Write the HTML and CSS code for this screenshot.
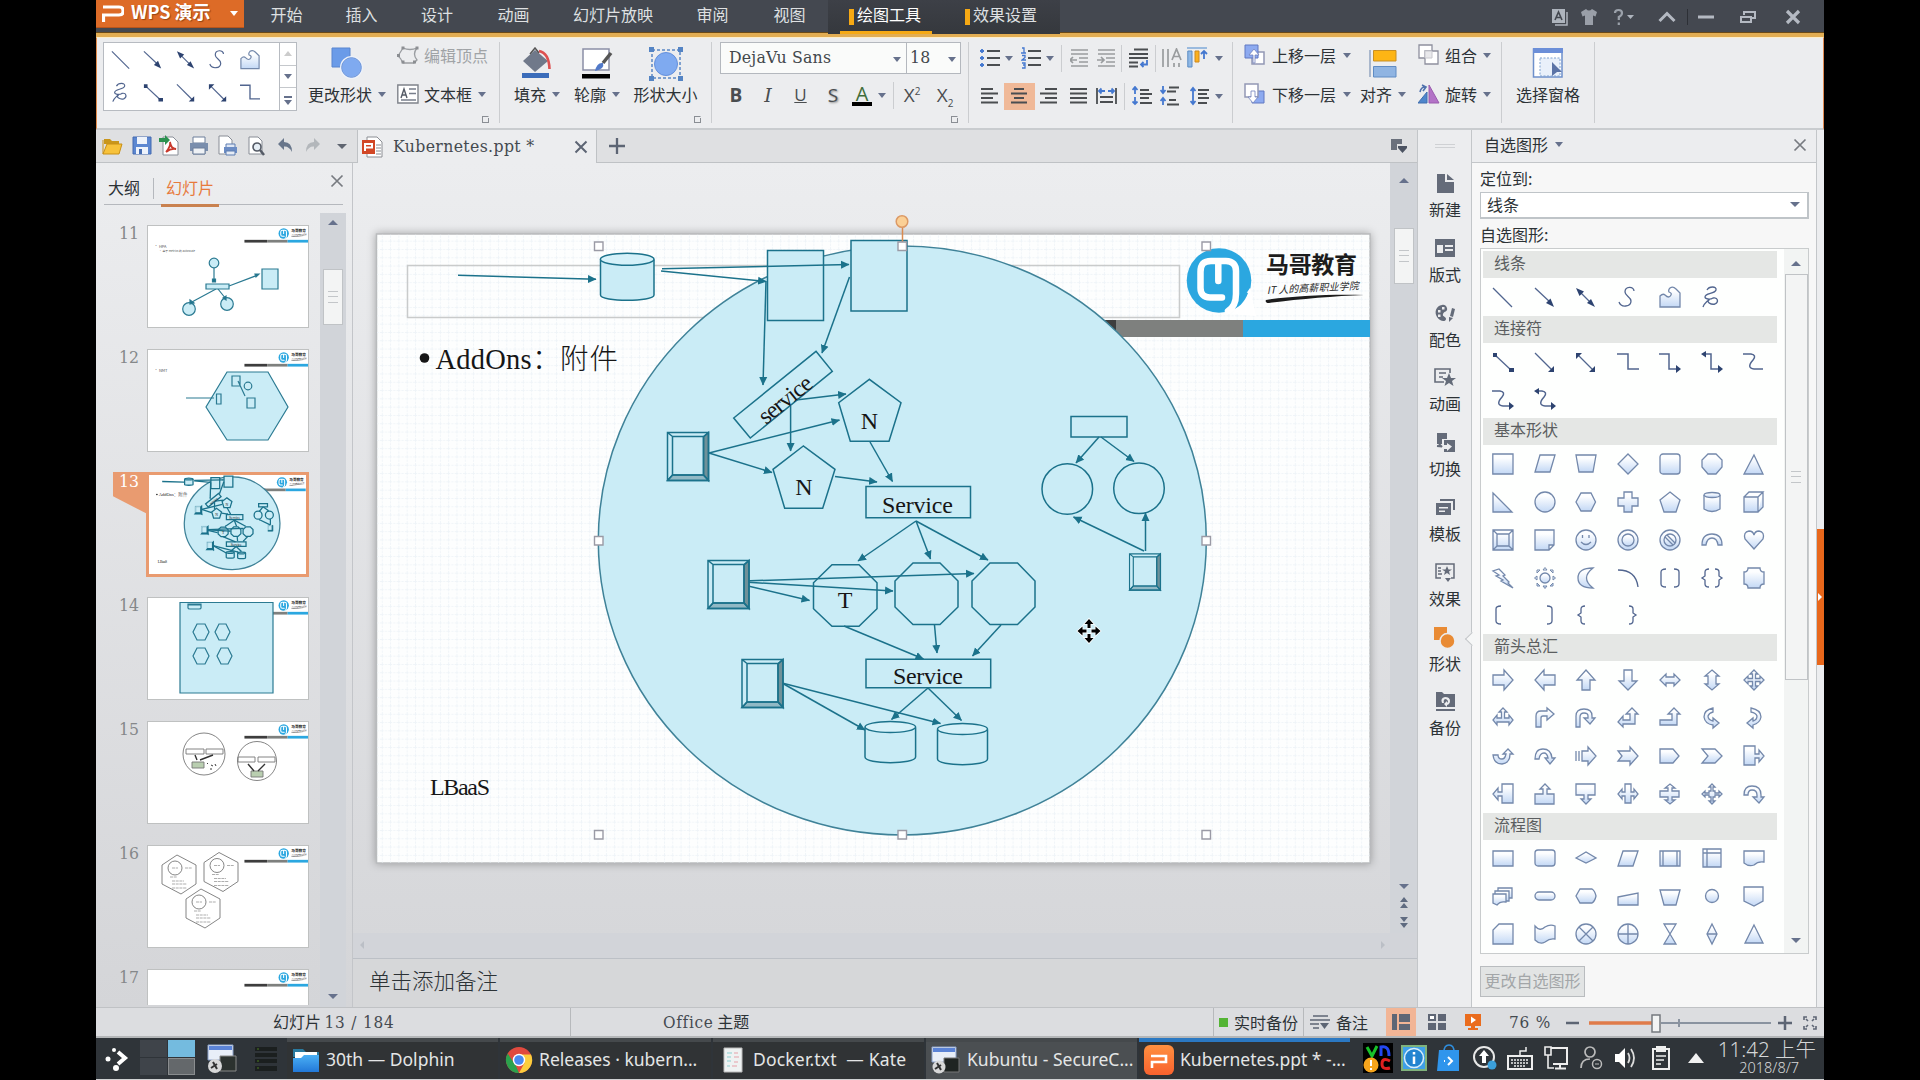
FILE: index.html
```html
<!DOCTYPE html>
<html lang="zh-CN">
<head>
<meta charset="utf-8">
<title>WPS 演示 - Kubernetes.ppt</title>
<link rel="stylesheet" href="styles.css">
</head>
<body>
<svg class="defs" width="0" height="0">
  <defs>
    <linearGradient id="sg" x1="0" y1="0" x2="0" y2="1"><stop offset=".2" stop-color="#fdfeff"/><stop offset="1" stop-color="#c3d8f5"/></linearGradient>
    <linearGradient id="bluefold" x1="0" y1="0" x2="0" y2="1"><stop offset="0" stop-color="#4bb0f5"/><stop offset="1" stop-color="#2278d8"/></linearGradient>
    <linearGradient id="wpsg" x1="0" y1="0" x2="0" y2="1"><stop offset="0" stop-color="#ff9040"/><stop offset="1" stop-color="#f8622e"/></linearGradient>
    <pattern id="dots" width="8.3" height="8.3" patternUnits="userSpaceOnUse"><path d="M0 .5H8.3M.5 0V8.3" stroke="#eff4f8" stroke-width="1" stroke-dasharray="2 1.2"/></pattern>
    <marker id="ah" markerUnits="userSpaceOnUse" markerWidth="9" markerHeight="9" refX="8" refY="4.5" orient="auto"><path d="M0 .5L8.5 4.5L0 8.5z" fill="#1b728b"/></marker>
    <symbol id="l-line" viewBox="0 0 22 22"><path class="ln" d="M1 2L20 21"/></symbol>
    <symbol id="l-arrow" viewBox="0 0 22 22"><path class="ln" d="M1 2L17 17"/><path class="hd" d="M20 21l-8-4 4.500-4.500z"/></symbol>
    <symbol id="l-double" viewBox="0 0 22 22"><path class="ln" d="M4 5L17 18"/><path class="hd" d="M20 21l-8-4 4-4zM1 2l8 3.500-4.500 4.500z"/></symbol>
    <symbol id="l-curve" viewBox="0 0 22 22"><path class="ln" d="M17 5C17 0 8 0 8 6C8 10 14 11 14 15C14 21 4 22 2 16"/></symbol>
    <symbol id="l-free" viewBox="0 0 22 22"><path class="sh" d="M1 21V10Q4 7 6 9Q10 13 12 9Q13 7 10 6Q9 4 11 2Q14 0 17 3L21 7V21z"/></symbol>
    <symbol id="l-scrib" viewBox="0 0 22 22"><path class="ln" d="M6 4C8 0 16 0 15 4C14 8 4 7 4 11C4 13 9 14 12 12C17 11 18 16 14 18C10 19 5 16 8 14C10 12 3 17 2 21"/></symbol>
    <symbol id="c-sq" viewBox="0 0 22 22"><path class="ln" d="M3 4L19 19"/><path class="hd" d="M1 2h4v4H1zM17 17h5v4h-5z"/></symbol>
    <symbol id="c-arr" viewBox="0 0 22 22"><path class="ln" d="M1 2L18 19"/><path class="hd" d="M20 21h-6l6-6z"/></symbol>
    <symbol id="c-dbl" viewBox="0 0 22 22"><path class="ln" d="M3 4L18 19"/><path class="hd" d="M20 21h-6l6-6zM1 2h6l-6 6z"/></symbol>
    <symbol id="c-elb" viewBox="0 0 22 22"><path class="ln w" d="M0 3H11V18H22"/></symbol>
    <symbol id="bev" viewBox="0 0 42 49" overflow="visible"><path d="M36.500 5L41.500.5V48.500L36.500 43z" fill="#6f9199"/><path d="M5.500 43H36.500L41.500 48.500H.5z" fill="#91b9c5"/><path d="M.5.5H41.500V48.500H.5zM5.500 4.500H36.500V43H5.500zM.5.5L5.500 4.500M41.500.5L36.500 4.500M.5 48.500L5.500 43M41.500 48.500L36.500 43" fill="none" stroke="#1b728b" stroke-width="1.500"/></symbol>
    <g id="brand">
      <path d="M975 320H1116V337H975z" fill="#3d3d3d"/><path d="M1116 320H1243V337H1116z" fill="#7e807e"/><path d="M1243 320H1370V337H1243z" fill="#2ba7e0"/>
      <circle cx="1219" cy="280.500" r="32.300" fill="#2ba7e0"/>
      <path d="M1232 314L1250 288L1256 316z" fill="#fff"/><path d="M1229 311C1238 309 1245 302 1248 293L1240 290z" fill="#2ba7e0"/>
      <path d="M1222 297.500H1210C1203 297.500 1200.500 293 1200.500 288V272C1200.500 264 1204 261 1211 261H1226C1233 261 1236 265 1236 271V294C1236 302 1233 308 1228 311M1218.300 263V281" fill="none" stroke="#fff" stroke-width="6.500" stroke-linecap="round"/>
      <text x="1266" y="273" class="brandname" textLength="91">马哥教育</text>
      <text x="1267" y="294" class="brandtag" textLength="92" transform="rotate(-3 1267 294)">IT 人的高薪职业学院</text>
      <path d="M1266 300C1290 296 1330 294 1364 295C1335 296 1300 299 1269 303C1266 303 1265 301 1266 300z" fill="#1c1c1c"/>
    </g>
    <g id="diagram" stroke="#1b728b" fill="#caecf6">
      <ellipse cx="902.300" cy="540.500" rx="304" ry="294.500" stroke="#3f8298"/>
      <path d="M600.500 259.500V295C600.500 302 654 302 654 295V259.500"/><ellipse cx="627.200" cy="259.300" rx="26.800" ry="6" fill="#d5f1f9"/>
      <path d="M767.500 250.500H823.500V320.500H767.500zM851 240.500H907V311H851z"/>
      <g fill="none">
        <g marker-end="url(#ah)">
          <path d="M458 275.300L596 279.300"/><path d="M662 268.800L849 264.500"/><path d="M661 271L766 281.500"/><path d="M766 281L763 385"/><path d="M849.500 277L822 353"/>
          <path d="M796 400L846 394"/><path d="M790.600 406V451"/><path d="M709 453L839.500 420"/><path d="M709 453L772 472.500"/><path d="M835 476.500L877 482"/><path d="M870 442L892.500 481.500"/>
          <path d="M916 521L858 561"/><path d="M916 521L930.500 559"/><path d="M916 521L988 560"/>
          <path d="M1099 437L1076 463"/><path d="M1101 437L1134 461.500"/><path d="M1145.500 551V513"/><path d="M1144 551L1073.500 517"/>
          <path d="M744 581L974 573.500"/><path d="M744 582L893 591"/><path d="M748 586L809.500 600.500"/>
          <path d="M844 626L923.500 659"/><path d="M934.500 625L937 653"/><path d="M1001 625L972.500 656"/>
          <path d="M928 688L891.500 719.500"/><path d="M928 688L961.500 720.500"/><path d="M782 683L865 730"/><path d="M782 683L940.500 723.500"/>
        </g>
        <path d="M816 351.300L832.300 371.300L750.300 438L733.700 418z"/>
        <path d="M869.300 379.300L838.700 402.700L850.300 441.300H889L901 402.700z"/>
        <path d="M803.300 446L773 469.300L784.700 508.300H822.700L835 469.300z"/>
        <path d="M866 486.500H970.500V517.700H866zM1071 416.500H1127V437H1071zM866 659.300H990.700V687.700H866z"/>
        <circle cx="1067.300" cy="489" r="25.300"/><circle cx="1139" cy="488.300" r="25.300"/>
        <path d="M832 564.700H859L877 582.700V608.700L859 626.300H832L813.500 608.700V582.700z"/>
        <path d="M913 563H940L958 581V607L940 624.500H913L895 607V581z"/>
        <path d="M990 563H1017.500L1035 581V607L1017.500 624.500H990L972 607V581z"/>
        <path d="M865 727.500V757C865 764.500 915.600 764.500 915.600 757V727.500M937.500 729.500V759C937.500 766.500 987.500 766.500 987.500 759V729.500"/>
      </g>
      <ellipse cx="890.300" cy="727" rx="25.300" ry="5.500" fill="#d5f1f9"/><ellipse cx="962.500" cy="729" rx="25" ry="5.500" fill="#d5f1f9"/>
      <use href="#bev" x="667" y="432" width="42" height="49"/><use href="#bev" x="707.500" y="560" width="42" height="49"/><use href="#bev" x="741.500" y="659" width="42" height="49"/><use href="#bev" x="1129" y="553.500" width="32" height="37"/>
      <g class="slidetext" stroke="none" fill="#161616">
        <text x="869.500" y="429" text-anchor="middle">N</text><text x="804" y="495" text-anchor="middle">N</text><text x="845" y="607.500" text-anchor="middle">T</text>
        <text x="882" y="512.700" textLength="71">Service</text><text x="893" y="684" textLength="70">Service</text>
        <text x="766" y="425" textLength="62" transform="rotate(-39 766 425)">service</text>
        <text x="430" y="795" textLength="60">LBaaS</text>
      </g>
      <g class="slidetitle" stroke="none" fill="#161616"><circle cx="424.500" cy="358" r="4.800"/><text x="435.500" y="368.500" textLength="96">AddOns</text><text x="532" y="369" class="cjk">：</text><text x="560" y="369" class="cjk" textLength="58">附件</text></g>
    </g>
  </defs>
</svg>

<div class="desktop">
  <header class="titlebar">
    <div class="wps"><svg width="22" height="18"><path d="M1 3H17Q21 3 21 6V8Q21 11 17 11H1.500V18" fill="none" stroke="#fff" stroke-width="3.200"/></svg><b>WPS 演示</b><i class="caret white"></i></div>
    <nav class="menu"><span>开始</span><span>插入</span><span>设计</span><span>动画</span><span>幻灯片放映</span><span>审阅</span><span>视图</span></nav>
    <nav class="ctx"><span class="on">绘图工具</span><span>效果设置</span></nav>
    <div class="wintools">
      <svg width="18" height="18"><path d="M1 1H14V15H1z" fill="#aeb4bd"/><path d="M16 4V17H4" fill="none" stroke="#aeb4bd" stroke-width="1.500"/><path d="M4 12L7.500 4L11 12M5.500 9.500H9.500" fill="none" stroke="#43474f" stroke-width="1.600"/></svg>
      <svg width="18" height="18"><path d="M1 4L6 1Q9 4 12 1L17 4L15.500 8.500L13 7.500V17H5V7.500L2.500 8.500z" fill="#9a9fa8"/></svg>
      <svg width="28" height="18"><path d="M3 5Q3 2 6.500 2Q10 2 10 5Q10 7.500 6.800 9V12M6.800 14.500V17" fill="none" stroke="#9ba1aa" stroke-width="2.200"/><path d="M15 7H22L18.500 11z" fill="#aeb4bd"/></svg>
      <svg width="18" height="18"><path d="M1.500 13L9 5.500L16.500 13" fill="none" stroke="#b4b9c2" stroke-width="3"/></svg>
      <i class="tsep"></i>
      <svg width="18" height="18"><path d="M1 9H17" stroke="#b4b9c2" stroke-width="3"/></svg>
      <svg width="18" height="18"><path d="M5 7V4H16V10H13M2 9H12V14H2z" fill="none" stroke="#b4b9c2" stroke-width="2"/></svg>
      <svg width="18" height="18"><path d="M3 3L15 15M15 3L3 15" stroke="#b4b9c2" stroke-width="3.200"/></svg>
    </div>
  </header>

  <section class="ribbon">
    <div class="group g1">
      <div class="gallery">
        <div class="cells">
          <svg><use href="#l-line"/></svg><svg><use href="#l-arrow"/></svg><svg><use href="#l-double"/></svg><svg><use href="#l-curve"/></svg><svg><use href="#l-free"/></svg>
          <svg><use href="#l-scrib"/></svg><svg><use href="#c-sq"/></svg><svg><use href="#c-arr"/></svg><svg><use href="#c-dbl"/></svg><svg><use href="#c-elb"/></svg>
        </div>
        <div class="gscroll"><span><i class="caret up dim"></i></span><span><i class="caret"></i></span><span><i class="caret bar"></i></span></div>
      </div>
      <div class="big w94"><svg width="32" height="32"><path d="M1 1H19V20H1z" fill="#6a9be8" stroke="#5985cf"/><circle cx="20.500" cy="20.500" r="10.500" fill="#7faaf0" stroke="#eef2f9" stroke-width="2"/><circle cx="20.500" cy="20.500" r="9.800" fill="none" stroke="#5f8cd8"/></svg><label>更改形状<i class="caret"></i></label></div>
      <div class="stack">
        <div class="small off"><svg width="22" height="18"><path d="M6 2Q13 5 20 2Q15 8 20 14L17 17H6Q4 12 1 10z" fill="none" stroke="#9a9da1" stroke-width="1.300"/><path d="M4.500.5h3v3h-3zM18.500.5h3v3h-3zM0 8h3v3H0zM4.500 14.500h3v3h-3zM16 14.500h3v3h-3z" fill="#8b8e92"/></svg>编辑顶点</div>
        <div class="small"><svg width="22" height="20"><path d="M.8 1H21V19H.8z" fill="#fff" stroke="#7f838b" stroke-width="1.400"/><path d="M4 14L7 5L10 14M5 11H9" fill="none" stroke="#555b66" stroke-width="1.400"/><path d="M12 5H19M12 9.500H19M4 16H19" stroke="#777e8b" stroke-width="1.300"/></svg>文本框<i class="caret"></i></div>
      </div>
      <i class="launch"></i>
    </div>
    <div class="group g2">
      <div class="big w60"><svg width="32" height="32"><path d="M14 3L27 14L14 25L2 14z" fill="#70798a"/><path d="M9 7L14 1L18 6" fill="none" stroke="#555" stroke-width="1.500"/><path d="M18 4Q28 6 28.500 22" fill="none" stroke="#dd5151" stroke-width="2.600"/><path d="M1 26H28V31H1z" fill="#3a6cba"/></svg><label>填充<i class="caret"></i></label></div>
      <div class="big w60"><svg width="32" height="32"><path d="M2 2H28V23H2z" fill="#fff" stroke="#8a8fa6" stroke-width="1.500"/><path d="M30 6L22 16" stroke="#555" stroke-width="3.500"/><path d="M14 24Q16 15 22 16Q24 22 14 24z" fill="#5179c9"/><path d="M1 27H29V31.500H1z" fill="#000"/></svg><label>轮廓<i class="caret"></i></label></div>
      <div class="big w77"><svg width="34" height="34"><path d="M3 3H31V31H3z" fill="none" stroke="#5a86c5" stroke-width="1.500" stroke-dasharray="3 2"/><circle cx="17" cy="17" r="11.500" fill="#7faaf0" stroke="#6490dc"/><path d="M0 0h5v5H0zM29 0h5v5h-5zM0 29h5v5H0zM29 29h5v5h-5z" fill="#5484c4"/></svg><label>形状大小</label></div>
      <i class="launch"></i>
    </div>
    <div class="group g3">
      <div class="fontbox"><span>DejaVu Sans<i class="caret"></i></span><span>18<i class="caret"></i></span></div>
      <div class="fontrow"><b>B</b><em>I</em><u>U</u><span class="shadow">S</span><span class="acolor">A</span><i class="caret"></i><i class="rsep"></i><span>X<sup>2</sup></span><span>X<sub>2</sub></span></div>
      <i class="launch"></i>
    </div>
    <div class="group g4">
      <div class="prow1">
        <svg width="20" height="20"><path d="M7 3H20M7 10H20M7 17H20" class="k"/><path d="M0 3h4M2 1v4M0 10h4M2 8v4M0 17h4M2 15v4" class="bl"/></svg><i class="caret"></i>
        <svg width="20" height="22"><path d="M7 4H20M7 11H20M7 18H20" class="k"/><path d="M1 1h2v5M0 6h5M1 8.500h3v2L1 13h4M1 16h3v2H2h2v3H1" class="bl thin"/></svg><i class="caret"></i><i class="rsep"></i>
        <svg width="18" height="20"><path d="M1 2H18M1 6H18M9 10H18M9 14H18M1 18H18" class="gr"/><path d="M0 12H7M3 9L0 12L3 15" class="gr"/></svg>
        <svg width="18" height="20"><path d="M1 2H18M1 6H18M9 10H18M9 14H18M1 18H18" class="gr"/><path d="M0 12H7M4 9L7 12L4 15" class="gr"/></svg><i class="rsep"></i>
        <svg width="20" height="20"><path d="M5 1.500H19M0 6H19M0 10H19M0 14.500H9M0 18.500H9" class="k"/><path d="M18 12V16.500H12M14.500 14L12 16.500L14.500 19" class="bl"/></svg><i class="rsep"></i>
        <svg width="20" height="20"><path d="M1 1V19M6 1V19M10 12L14.500 1L19 12M11.500 8.500H17.500M12 15V19M17 15V19" class="gr"/></svg>
        <svg width="22" height="22"><path d="M0 1H20" stroke="#7fa8d8" stroke-width="1.500"/><path d="M.8 4H5V20H.8z" fill="#8fb8e6" stroke="#5a8cc4"/><path d="M8 4H12V15H8z" fill="#fbb01e" stroke="#cf8a1c"/><path d="M17 12V4M14 7L17 4L20 7" class="bl"/></svg><i class="caret"></i>
      </div>
      <div class="prow2">
        <svg width="18" height="18"><path d="M0 2H12M0 6.500H17M0 11H12M0 15.500H17" class="k"/></svg>
        <span class="hl"><svg width="18" height="18"><path d="M4 2H14M1 6.500H17M4 11H14M1 15.500H17" class="k"/></svg></span>
        <svg width="18" height="18"><path d="M6 2H18M1 6.500H18M6 11H18M1 15.500H18" class="k"/></svg>
        <svg width="18" height="18"><path d="M1 2H18M1 6.500H18M1 11H18M1 15.500H18" class="k"/></svg>
        <svg width="22" height="20"><path d="M1 2V18M20 2V18M4 11H17M4 16H17" class="k"/><path d="M3 5H9M12 5H18M5.500 2.500L3 5L5.500 7.500M15.500 2.500L18 5L15.500 7.500" class="bl"/></svg><i class="rsep"></i>
        <svg width="20" height="20"><path d="M8 4H17M8 8H20M8 12H17M8 17H20" class="k"/><path d="M3 8V1M.5 4L3 1L5.500 4M3 11V18M.5 15.500L3 18L5.500 15.500" class="bl"/></svg>
        <svg width="20" height="20"><path d="M9 1.500H19M7 5.500H16M9 14H16M7 18.500H19" class="k"/><path d="M3 0V7M.5 4L3 7L5.500 4M3 19V12M.5 15L3 12L5.500 15" class="bl"/></svg>
        <svg width="20" height="20"><path d="M8 4H19M8 8H17M8 12H19M8 17H17" class="k"/><path d="M3 2V18M.5 5L3 2L5.500 5M.5 15L3 18L5.500 15" class="bl"/></svg><i class="caret"></i>
      </div>
    </div>
    <div class="group g5">
      <div class="stack c1">
        <div class="small"><svg width="22" height="22"><path d="M8 8H20V20H8z" fill="#fff" stroke="#9298b5" stroke-width="1.500"/><path d="M1 1H14V14H1z" fill="#8daaf0" stroke="#6078c2"/><path d="M9 19V11H5L10 5L15 11H11V19z" fill="#fff" stroke="#7182bb" stroke-width=".8"/></svg>上移一层<i class="caret"></i></div>
        <div class="small"><svg width="22" height="22"><path d="M8 8H20V20H8z" fill="#8daaf0" stroke="#6078c2"/><path d="M1 1H14V14H1z" fill="#fff" stroke="#9298b5" stroke-width="1.500"/><path d="M7 8V14H4L9 20L14 14H11V8z" fill="#fff" stroke="#7182bb" stroke-width=".8"/></svg>下移一层<i class="caret"></i></div>
      </div>
      <div class="big w56"><svg width="30" height="32"><path d="M2 3V30" stroke="#93a5c1" stroke-width="1.500"/><path d="M5.500 3.500H28V14H5.500z" fill="#fdb515" stroke="#c78f24"/><path d="M5.500 19.500H28V30H5.500z" fill="#8fb4e2" stroke="#5f8cc4"/></svg><label>对齐<i class="caret"></i></label></div>
      <div class="stack c3">
        <div class="small"><svg width="22" height="22"><path d="M1 1H14V14H1z" fill="#fff" stroke="#8e909e" stroke-width="1.300"/><path d="M7 7H20V20H7z" fill="#fff" stroke="#8e909e" stroke-width="1.300"/><path d="M7 7H14V14H7z" fill="#e9e9ec" stroke="#c8c8ce"/></svg>组合<i class="caret"></i></div>
        <div class="small"><svg width="22" height="22"><path d="M0 20L9 9V20z" fill="#4f86cc" stroke="#406fae"/><path d="M11 2L21 20H11z" fill="#b373c7" stroke="#9a5cae"/><path d="M2 9Q3 4 7 4M4 2L8 4L5 8" fill="none" stroke="#4f72ad" stroke-width="1.600"/></svg>旋转<i class="caret"></i></div>
      </div>
    </div>
    <div class="group g6">
      <div class="big w93"><svg width="32" height="32"><path d="M1.500 2H30V30H1.500z" fill="#fff" stroke="#6e90cb" stroke-width="1.500"/><path d="M1 1H31V6H1z" fill="#6c8fd8"/><path d="M8 11H28V29H8z" fill="#e9f0fa" stroke="#7ea1cf" stroke-dasharray="2 1.500"/><path d="M20 15L30 25L25 25L20 29z" fill="#5b73a6"/></svg><label>选择窗格</label></div>
    </div>
  </section>

  <main class="work">
    <div class="docs">
      <div class="tabs">
        <div class="qat">
          <svg><path d="M2 4H8L10 6H17V9H2z" fill="#c9961c"/><path d="M1 19V5M5 9H20L17 19H1z" fill="#f7c23b" stroke="#c99017"/></svg>
          <svg><path d="M2 2H20V19H2z" fill="#5c87d1" stroke="#456bb0"/><path d="M6 2H16V9H6zM5 12H17V19H5z" fill="#eef3fb"/><path d="M8 14h3v5H8z" fill="#456bb0"/></svg>
          <svg><path d="M4 2H14L19 7V20H4z" fill="#fff" stroke="#8a8f98"/><path d="M7 17Q12 11 11 7Q12 14 17 14Q12 13 7 17" fill="none" stroke="#c8392d" stroke-width="1.800"/><path d="M0 3H6V0L11 5L6 10V7H0z" fill="#2c9150"/></svg>
          <svg><path d="M5 2H17V8H5zM5 14H17V19H5z" fill="#fff" stroke="#6d7f9a"/><path d="M2 8H20V16H2z" fill="#7a8ead"/><path d="M5 13H17V19H5z" fill="#eef1f5" stroke="#6d7f9a"/></svg>
          <svg><path d="M2 1H11L15 5V19H2z" fill="#fff" stroke="#888d96"/><path d="M9 9H18V13H9z" fill="#dfe7f4" stroke="#5d7cb1"/><path d="M7 12H20V18H7z" fill="#6b8cc4"/><path d="M9 16H18V20H9z" fill="#e6ecf5" stroke="#5d7cb1"/></svg>
          <svg><path d="M4 2H13L17 6V19H4z" fill="#fff" stroke="#888d96"/><circle cx="12" cy="12" r="4" fill="#e6eef5" stroke="#555b66" stroke-width="1.600"/><path d="M15 15L19 20" stroke="#555b66" stroke-width="2.500"/></svg>
          <svg><path d="M4 9L10 3V7Q18 7 18 17Q15 11 10 11.500V15z" fill="#68768b"/></svg>
          <svg><path d="M18 9L12 3V7Q4 7 4 17Q7 11 12 11.500V15z" fill="#b3b7bb"/></svg>
          <i class="caret"></i>
        </div>
        <div class="tab"><svg width="24" height="24"><path d="M6 2H16L21 7V22H6z" fill="#fff" stroke="#8b8e94"/><path d="M15 10H20M15 13H20M15 16H20M15 19H20" stroke="#8b8e94"/><path d="M1 5H14V19H1z" fill="#d24726"/><path d="M4 16V9H11V12.500H4" fill="none" stroke="#fff" stroke-width="2"/></svg><span class="se">Kubernetes.ppt *</span><svg width="14" height="14"><path d="M1.500 1.500L12.500 12.500M12.500 1.500L1.500 12.500" stroke="#5d6574" stroke-width="2"/></svg></div>
        <div class="plus"><svg width="18" height="18"><path d="M9 1V17M1 9H17" stroke="#5d6574" stroke-width="2.300"/></svg><svg width="18" height="16"><path d="M1 1H12V6H7V12H1z" fill="#6a707c"/><path d="M8 8H17V10L12.500 15L8 10z" fill="#4c5362"/></svg></div>
      </div>
      <div class="panes">
        <aside class="side">
          <div class="sidehead"><span>大纲</span><span class="on">幻灯片</span><svg width="14" height="14"><path d="M1.500 1.500L12.500 12.500M12.500 1.500L1.500 12.500" stroke="#777b80" stroke-width="1.700"/></svg></div>
          <div class="sidebody">
            <div class="thumbs">
              <div class="th"><b>11</b><svg viewBox="0 0 160 101"><use href="#brand" transform="scale(.161) translate(-376 -234)"/><g class="t"><circle cx="66" cy="37" r="4.800"/><path d="M66 42V55M110 49L81 60M68 63L42 77M70 63L78 73" /><path d="M58 58H81V63H58zM114 43H130V63H114z"/><circle cx="41" cy="83" r="6.300"/><circle cx="79" cy="78" r="6.300"/><path d="M107 48l4 0-3 3zM64.500 53h3v3h-3zM42 74l0 4 4-1zM75 72l3-2 0 4z" fill="#1b728b"/></g><text x="6" y="21.500" class="tt">• HPA</text><text x="11" y="26" class="tt xs">• 基于 metrics 的 autoscale</text></svg></div>
              <div class="th"><b>12</b><svg viewBox="0 0 160 101"><use href="#brand" transform="scale(.161) translate(-376 -234)"/><g class="t"><path d="M79 22H120L140 57L120 90H79L58 57z"/><path d="M84 26H92V36H84zM99 48H107V58H99zM68.500 44H73V54H68.500zM38 48H66M90 31L97 46"/><circle cx="100" cy="36" r="3.800"/></g><text x="6" y="21.500" class="tt">• NMT</text></svg></div>
              <div class="th sel"><b>13</b><svg viewBox="376 234 994 629"><use href="#brand"/><use href="#diagram" stroke-width="8"/></svg></div>
              <div class="th"><b>14</b><svg viewBox="0 0 160 101"><use href="#brand" transform="scale(.161) translate(-376 -234)"/><g class="t"><path d="M32 4.500H125V95H32z"/><path d="M40 6V10Q40 11 42 11H51Q53 11 53 10V6zM40 7H53M49 26H57L61 34L57 42H49L45 34zM71 26H78L82 34L78 42H71L67 34zM49 50H57L61 58L57 66H49L45 58zM73 50H80L84 58L80 66H73L69 58z"/></g></svg></div>
              <div class="th"><b>15</b><svg viewBox="0 0 160 101"><use href="#brand" transform="scale(.161) translate(-376 -234)"/><g class="n"><circle cx="56" cy="32" r="21"/><circle cx="109" cy="39" r="19.500"/><path d="M38 27H56V32H38zM58 27H75V32H58zM90 35H107V40H90zM110 35H127V40H110z"/><path d="M44 40H56V46H44zM103 49H115V55H103z" fill="#b9ceb0"/><path d="M49 38L47 33M52 38L65 33M106 49L100 42M110 49L117 42" stroke="#333" stroke-width="1.400"/><path d="M59 41l1 1M63 43l2 1M67 42l1 2M62 47l2 0" stroke="#222"/></g></svg></div>
              <div class="th"><b>16</b><svg viewBox="0 0 160 101"><use href="#brand" transform="scale(.161) translate(-376 -234)"/><g class="n"><g id="hx"><path d="M29 9L48 19V38L33 48L14 38V19z"/><circle cx="27" cy="22" r="7"/><path d="M24 22H30M37 22H44M22 31H29M24 35H36M24 38H39M24 42H39" stroke-width=".6" stroke-dasharray="3 .7"/></g><use href="#hx" x="42" y="-2.500"/><use href="#hx" x="24" y="34"/></g></svg></div>
              <div class="th"><b>17</b><svg viewBox="0 0 160 101"><use href="#brand" transform="scale(.161) translate(-376 -234)"/></svg></div>
            </div>
            <div class="vbar"><i class="caret up"></i><div class="grip"></div><i class="caret"></i></div>
          </div>
        </aside>
        <section class="editor">
          <div class="stage">
            <svg class="canvas" viewBox="353 163 1037 770">
              <rect x="376.500" y="234" width="993.500" height="629" class="paper"/>
              <rect x="377" y="234.500" width="992.500" height="628" fill="url(#dots)"/>
              <rect x="407.500" y="265.500" width="772" height="52" fill="none" stroke="#c9cbcb" stroke-width="1.500"/>
              <use href="#brand"/>
              <use href="#diagram" stroke-width="1.500"/>
              <path d="M902.500 227V242" stroke="#d98a50" stroke-width="1.500"/><circle cx="902" cy="221.500" r="5.800" fill="#fbd096" stroke="#dc9a66" stroke-width="1.500"/>
              <path class="handle" d="M594.500 242h8.500v8.500h-8.500zM898 242h8.500v8.500h-8.500zM1202 242h8.500v8.500h-8.500zM594.500 536.500h8.500v8.500h-8.500zM1202 536.500h8.500v8.500h-8.500zM594.500 830.500h8.500v8.500h-8.500zM898 830.500h8.500v8.500h-8.500zM1202 830.500h8.500v8.500h-8.500z"/>
              <path d="M1089 619l4.500 5h-3v4h-3v-4h-3zM1089 643l4.500-5h-3v-4h-3v4h-3zM1077.500 631l5-4.500v3h4v3h-4v3zM1100.500 631l-5-4.500v3h-4v3h4v3z" fill="#000" stroke="#fff" stroke-width="1.600" paint-order="stroke"/>
            </svg>
            <div class="vbar main"><i class="caret up"></i><div class="grip"></div><div class="pgs"><i class="caret"></i><svg width="10" height="12"><path d="M5 0L9 5H1zM5 6L9 11H1z"/></svg><svg width="10" height="12"><path d="M5 5L9 0H1zM5 11L9 6H1z"/></svg></div></div>
          </div>
          <div class="hbar"><i></i><i class="r"></i></div>
          <div class="notes">单击添加备注</div>
        </section>
      </div>
    </div>
    <aside class="strip">
      <i class="dragger"></i>
      <div><svg><path d="M3 1H11V9H20V20H3z"/><path d="M13 1L20 7H13z"/></svg>新建</div>
      <div><svg><path fill-rule="evenodd" d="M1 1H21V19H1zM3 7H9V15H3zM11 7H19V9H11zM11 11H19V13H11z"/></svg>版式</div>
      <div><svg><path fill-rule="evenodd" d="M8 2C2 3 0 9 3 14C6 19 12 19 12 16C12 13 8 14 9 11C10 8 14 9 13 5C12 2 10 1.500 8 2zM8 4h2.500v2.500H8zM4 7h2.500v2.500H4zM4 11.500h2.500v2.500H4z"/><path d="M18 5l3 1-2 8-3-1zM15 14l4 1-4 4z"/></svg>配色</div>
      <div><svg><path d="M10 15H1V2H16V6M5 6H12M5 10H9" fill="none" stroke="#646b79" stroke-width="1.600"/><path d="M15 6L17 11H22L18 14L19.500 19L15 16L10.500 19L12 14L8 11H13z"/></svg>动画</div>
      <div><svg><path d="M3 1H13V7H8V12H3z"/><path fill-rule="evenodd" d="M10 8H21V20H10V17H13V19L18 14.500L13 11V13H10z"/><path d="M3 14L8 14.500M5 12L8 15" stroke="#646b79" stroke-width="2"/></svg>切换</div>
      <div><svg><path d="M6 2H21V13H19V4H6z"/><path fill-rule="evenodd" d="M2 6H17V18H2zM5 10H14V11.500H5zM5 13.500H11V15H5z"/></svg>模板</div>
      <div><svg><path d="M7 16H2V2H20V16H17M4 6H7M4 9H7M4 12H8" fill="none" stroke="#646b79" stroke-width="1.500"/><path d="M13 4L14.500 7.500H18L15 9.500L16 13L13 11L10 13L11 9.500L8 7.500H11.500zM11 16H17L14 20z"/></svg>效果</div>
      <div class="on"><svg width="24" height="24"><path d="M1 1H14V14H1z"/><circle cx="14.500" cy="15" r="7.500" stroke="#ecedef" stroke-width="1.500"/></svg>形状</div>
      <div><svg><path fill-rule="evenodd" d="M2 1H8L10 3H21V16H2zM8 12Q6 7 11 6Q16 6 16 10Q16 13 13 14V16L10 13L13 10V12Q14 11 14 10Q13 8 11 8Q9 9 10 12z"/><path d="M2 18H21V20H2z"/></svg>备份</div>
    </aside>
    <aside class="shapes">
      <div class="shead">自选图形<i class="caret"></i><svg width="14" height="14"><path d="M1.500 1.500L12.500 12.500M12.500 1.500L1.500 12.500" stroke="#777b80" stroke-width="1.700"/></svg></div>
      <div class="sbody">
        <p>定位到:</p>
        <div class="select">线条<i class="caret"></i></div>
        <p>自选图形:</p>
        <div class="listbox">
          <div class="list">
            <h4>线条</h4>
            <div class="grid"><svg><use href="#l-line"/></svg><svg><use href="#l-arrow"/></svg><svg><use href="#l-double"/></svg><svg><use href="#l-curve"/></svg><svg><use href="#l-free"/></svg><svg><use href="#l-scrib"/></svg></div>
            <h4>连接符</h4>
            <div class="grid"><svg><use href="#c-sq"/></svg><svg><use href="#c-arr"/></svg><svg><use href="#c-dbl"/></svg><svg><use href="#c-elb"/></svg>
              <svg><path class="ln w" d="M0 3H10V18H18"/><path class="hd" d="M17 14l5 4-5 4z"/></svg>
              <svg><path class="ln w" d="M4 3H10V18H18"/><path class="hd" d="M17 14l5 4-5 4zM5 0V6.500L0 3z"/></svg>
              <svg><path class="ln w" d="M0 3H8Q14 4 10 9Q3 17 11 18H20"/></svg>
              <svg><path class="ln w" d="M0 3H8Q14 4 10 9Q3 17 11 18H18"/><path class="hd" d="M17 14l5 4-5 4z"/></svg>
              <svg><path class="ln w" d="M4 3H8Q14 4 10 9Q3 17 11 18H18"/><path class="hd" d="M17 14l5 4-5 4zM5 0V6.500L0 3z"/></svg></div>
            <h4>基本形状</h4>
            <div class="grid sh">
              <svg><path d="M.8 1H21V21H.8z"/></svg><svg><path d="M6 2H21L16 19H1z"/></svg><svg><path d="M1 2H21L18 19H4z"/></svg><svg><path d="M11 1L21 11L11 21L1 11z"/></svg><svg><rect x="1" y="1" width="20" height="20" rx="3"/></svg><svg><path d="M7 1H15L21 7V14L15 21H7L1 14V7z"/></svg><svg><path d="M11 2L20 21H1z"/></svg>
              <svg><path d="M1 2L20 21H1z"/></svg><svg><circle cx="11" cy="11" r="10"/></svg><svg><path d="M6 2H16L20.500 11L16 20H6L1 11z"/></svg><svg><path d="M7 1H15V7H21V15H15V21H7V15H1V7H7z"/></svg><svg><path d="M11 1L21 9L17 21H5L1 9z"/></svg><svg><path d="M3 4V18Q11 23 19 18V4"/><ellipse cx="11" cy="4" rx="8" ry="2.500"/></svg><svg><path d="M1 6H15V21H1zM1 6L6 1H20L15 6M20 1V16L15 21"/></svg>
              <svg><path d="M1 1H21V21H1zM5 5H17V17H5zM1 1L5 5M21 1L17 5M1 21L5 17M21 21L17 17"/></svg><svg><path d="M1 1H20V16L15 21H1zM20 16H15V21"/></svg><svg><circle cx="11" cy="11" r="10"/><path d="M6 13Q11 18 16 13M7.500 6V9M14 6V9" fill="none"/></svg><svg><circle cx="11" cy="11" r="10"/><circle cx="11" cy="11" r="6"/></svg><svg><circle cx="11" cy="11" r="10"/><circle cx="11" cy="11" r="6"/><path d="M6 8L14 16M8 6L16 14"/></svg><svg><path d="M1 16Q1 5 11 5Q21 5 21 16H17Q16 9 11 9Q6 9 5 16z"/></svg><svg><path d="M11 20L2 10Q0 3 6 2Q10 2 11 6Q12 2 16 2Q22 3 20 10z"/></svg>
              <svg><path d="M7 2L13 8L11 9L17 15L16 16L21 21L9 14L11 13L4 9L7 8L1 4z"/></svg><svg><circle cx="11" cy="11" r="5"/><path d="M9 3L11 .5L13 3zM9 19L11 21.500L13 19zM3 9L.5 11L3 13zM19 9L21.500 11L19 13zM3 6V3H6zM16 3H19V6zM3 16V19H6zM19 16V19H16z" stroke-width="1"/></svg><svg><path d="M18 1Q3 1 3 11Q3 21 18 21Q5 11 18 1z"/></svg><svg><path class="ln" d="M1 3Q19 3 21 20"/></svg><svg><path class="ln" d="M7 2Q2 2 2 5V17Q2 20 7 20M15 2Q20 2 20 5V17Q20 20 15 20"/></svg><svg><path class="ln" d="M8 2Q4 2 4 5V9L1 11L4 13V17Q4 20 8 20M14 2Q18 2 18 5V9L21 11L18 13V17Q18 20 14 20"/></svg><svg><path d="M5 1H17Q17 5 21 5V17Q17 17 17 21H5Q5 17 1 17V5Q5 5 5 1z"/></svg>
              <svg><path class="ln" d="M9 2Q4 2 4 5V17Q4 20 9 20"/></svg><svg><path class="ln" d="M13 2Q18 2 18 5V17Q18 20 13 20"/></svg><svg><path class="ln" d="M10 2Q6 2 6 5V9L3 11L6 13V17Q6 20 10 20"/></svg><svg><path class="ln" d="M12 2Q16 2 16 5V9L19 11L16 13V17Q16 20 12 20"/></svg>
            </div>
            <h4>箭头总汇</h4>
            <div class="grid sh">
              <svg><path d="M1 6H12V1L21 11L12 21V16H1z"/></svg><svg><path d="M21 6H10V1L1 11L10 21V16H21z"/></svg><svg><path d="M7 21V11H2L11 1L20 11H15V21z"/></svg><svg><path d="M7 1V12H2L11 21L20 12H15V1z"/></svg><svg><path d="M1 11L7 5V8H15V5L21 11L15 17V14H7V17z"/></svg><svg><path d="M11 1L18 7H15V15H18L11 21L4 15H7V7H4z"/></svg><svg><path d="M11 1L15 5H12.500V9.500H17V7L21 11L17 15V12.500H12.500V17H15L11 21L7 17H9.500V12.500H5V15L1 11L5 7V9.500H9.500V5H7z"/></svg>
              <svg><path d="M11 1L15 5H12.500V11H17V8L21 13L17 18V15H5V18L1 13L5 8V11H9.500V5H7z"/></svg><svg><path d="M2 20V9Q2 4 7 4H13V1L20 7L13 13V9H9Q7 9 7 11V20z"/></svg><svg><path d="M1 20V9Q1 2 9 2Q17 2 17 9V11H20L15 17L9 11H13V9Q13 6 9 6Q5 6 5 10V20z"/></svg><svg><path d="M15 1L21 7H18V17H6V20L1 15L6 9V13H13V7H9z"/></svg><svg><path d="M15 1L21 7H18V18H1V13H13V7H9z"/></svg><svg><path d="M12 1Q3 3 3 10Q4 17 12 18V21L18 16L12 11V14Q7 13 7 9Q8 6 12 5z"/></svg><svg><path d="M8 1Q18 3 18 10Q17 16 10 18V21L4 16L10 11V14Q14 13 14 9Q13 6 8 5z"/></svg>
              <svg><path d="M1 10Q2 19 10 19Q18 18 18 9H21L16 4L11 9H14Q13 14 10 14Q6 14 6 10z"/></svg><svg><path d="M1 14Q1 4 9 4Q17 4 18 13H21L16 19L11 13H14Q13 8 10 8Q6 8 5 14z"/></svg><svg><path d="M1 6V16M4 6V16M7 6H13V2L21 11L13 20V16H7z"/></svg><svg><path d="M1 6H13V2L21 11L13 20V16H1L5 11z"/></svg><svg><path d="M1 4H14L20 11L14 18H1z"/></svg><svg><path d="M1 4H14L21 11L14 18H1L7 11z"/></svg><svg><path d="M1 1H12V9H16V5L21 11L16 17V13H12V20H1z"/></svg>
              <svg><path d="M21 1H10V9H6V5L1 11L6 17V13H10V20H21z"/></svg><svg><path d="M1 21V11H9V6H6L11 1L16 6H13V11H20V21z"/></svg><svg><path d="M1 1V12H9V16H6L11 21L16 16H13V12H20V1z"/></svg><svg><path d="M8 1H14V9H17V6L21 11L17 16V13H14V20H8V13H5V16L1 11L5 6V9H8z"/></svg><svg><path d="M1 8H9V5H6L11 1L16 5H13V8H20V14H13V17H16L11 21L6 17H9V14H1z"/></svg><svg><path d="M11 1L14 4H12V8H14V10H18V8L21 11L18 14V12H14V14H12V18H14L11 21L8 18H10V14H8V12H4V14L1 11L4 8V10H8V8H10V4H8z"/></svg><svg><path d="M1 12Q1 3 9 3Q18 3 18 12V14H21L16 20L10 14H14V12Q14 7 9 7Q5 7 5 12z"/></svg>
            </div>
            <h4>流程图</h4>
            <div class="grid sh">
              <svg><path d="M1 4H21V19H1z"/></svg><svg><rect x="1" y="3" width="20" height="16" rx="3"/></svg><svg><path d="M1 11L11 5L21 11L11 16z"/></svg><svg><path d="M6 4H21L16 19H1z"/></svg><svg><path d="M1 4H21V19H1zM4 4V19M18 4V19"/></svg><svg><path d="M2 2H20V20H2zM6 2V20M2 6H20"/></svg><svg><path d="M1 4H21V15Q15 14 11 18Q6 20 1 16z"/></svg>
              <svg><path d="M6 3H20V13H6z"/><path d="M3 6H17V16H3z"/><path d="M1 9H14V17Q8 16 5 20L1 18z"/></svg><svg><rect x="1" y="7" width="20" height="8" rx="4"/></svg><svg><path d="M5 4H17Q20 6 21 11Q20 16 17 18H5L1 11z"/></svg><svg><path d="M1 12L21 8V20H1z"/></svg><svg><path d="M1 5H21L17 20H5z"/></svg><svg><circle cx="11" cy="11" r="6.500"/></svg><svg><path d="M1 2H20V16L11 21L1 16z"/></svg>
              <svg><path d="M7 1H21V21H1V7z"/></svg><svg><path d="M1 3Q6 9 11 4Q16 1 21 3V16Q16 15 11 19Q6 22 1 17z"/></svg><svg><circle cx="11" cy="11" r="10"/><path d="M4 4L18 18M18 4L4 18"/></svg><svg><circle cx="11" cy="11" r="10"/><path d="M1 11H21M11 1V21"/></svg><svg><path d="M5 1H17L5 21H17z"/></svg><svg><path d="M11 1L16 11L11 21L6 11zM6 11H16"/></svg><svg><path d="M11 2L20 20H2z"/></svg>
            </div>
          </div>
          <div class="lbar"><i class="caret up"></i><div class="grip"></div><i class="caret"></i></div>
        </div>
        <button class="change">更改自选图形</button>
      </div>
    </aside>
    <div class="edge"><i></i></div>
  </main>

  <footer class="status">
    <span class="s1">幻灯片 <span class="se">13 / 184</span></span><span class="s2"><span class="se">Office</span> 主题</span>
    <span class="s3"><i></i>实时备份</span>
    <span class="s4"><svg width="20" height="16"><path d="M3 2H18M0 6H20M0 10H9M3 14H9" stroke="#5d6574" stroke-width="1.500"/><path d="M10 9H19L14.500 15z" fill="#5d6574"/></svg>备注</span>
    <span class="v on"><svg width="20" height="18"><path d="M1 1H6V17H1zM8 1H19V9H8zM8 11H19V17H8z" fill="#5f6675"/></svg></span>
    <span class="v"><svg width="20" height="18"><path d="M1 1H9V8H1zM11 1H19V8H11zM1 10H9V17H1zM11 10H19V17H11z" fill="#5f6675"/><path d="M3 3H7V6H3z" fill="#fff"/></svg></span>
    <span class="v"><svg width="18" height="18"><path d="M1 1H17V13H1zM7 13H11V15H14V17H4V15H7z" fill="#ea6c1e"/><path d="M7 3.500L12 7L7 10.500z" fill="#fff"/></svg></span>
    <span class="zoom se">76 %</span>
    <svg class="slider" width="256" height="24"><path d="M1 13H14" stroke="#5d6574" stroke-width="2.500"/><g transform="translate(5)"><path d="M19 13H85" stroke="#e07b4a" stroke-width="3.500"/><path d="M91 13H201M109 9V17" stroke="#8a93a0" stroke-width="2"/><path d="M82 5H90V22H82z" fill="#f3f4f4" stroke="#75797f" stroke-width="1.500"/><path d="M208 13H222M215 6V20" stroke="#5d6574" stroke-width="2.500"/><path d="M234 10V7H237M243 7H246V10M234 16V19H237M243 19H246V16M236 9L238 11M244 9L242 11M236 17L238 15M244 17L242 15" fill="none" stroke="#5d6574" stroke-width="1.600"/></g></svg>
  </footer>

  <footer class="taskbar">
    <svg class="k1" width="24" height="26"><path d="M13 6L20 12L13 18" fill="none" stroke="#fff" stroke-width="4"/><circle cx="9" cy="4" r="2" fill="#fff"/><circle cx="3" cy="13" r="2.500" fill="#fff"/><circle cx="11" cy="22" r="3" fill="#fff"/></svg>
    <div class="pager"><i></i><i class="a"></i><i></i><i class="b"></i></div>
    <svg class="k2" width="30" height="30"><path d="M1 1H26V16H1z" fill="#e8eef8" stroke="#8aa0c8"/><path d="M2 2H25V6H2z" fill="#5b83d6"/><path d="M13 12H29V27H13z" fill="#2c322f" stroke="#888"/><circle cx="8" cy="22" r="7" fill="#d8d8d8"/><path d="M6 18L10 25M4 24L10 20" stroke="#333" stroke-width="2"/></svg>
    <svg class="k3" width="24" height="26"><path d="M1 1H23V5H1zM1 7H23V11H1zM1 13H23V17H1zM1 20H23V25H1z" fill="#1b1f1f"/><path d="M3 3H5M3 15H5M3 22H5" stroke="#4a7a20"/></svg>
    <div class="task"><svg width="28" height="26"><path d="M1 2H11L14 5H27V10H1z" fill="#2a7a9f"/><path d="M3 5H25V12H3z" fill="#fff"/><path d="M1 11H9L12 8H27V25H1z" fill="url(#bluefold)"/></svg><span>30th — Dolphin</span></div>
    <div class="task"><svg width="28" height="28"><circle cx="14" cy="14" r="13" fill="#e04a3f"/><path d="M2.700 7.500L11 20L14 27A13 13 0 0 1 2.700 7.500z" fill="#2ba24c"/><path d="M14 27A13 13 0 0 0 26 8.500H14L19.500 17z" fill="#fccd3c"/><circle cx="14" cy="14" r="6.200" fill="#fff"/><circle cx="14" cy="14" r="4.800" fill="#4a8af0"/></svg><span>Releases · kubern...</span></div>
    <div class="task kate"><svg width="20" height="26"><path d="M1 1H19V25H1z" fill="#eef2f2" stroke="#bbb"/><path d="M4 6H9M4 10H8M4 14H8M4 19H7" stroke="#89cfd0"/><path d="M11 6H15M11 10H16M11 15H15M9 19H14" stroke="#e6a0a8"/></svg><span>Docker.txt&nbsp; — Kate</span></div>
    <div class="task focus"><svg width="30" height="30"><path d="M1 2H25V17H1z" fill="#e8eef8" stroke="#8aa0c8"/><path d="M2 3H24V7H2z" fill="#5b83d6"/><path d="M13 13H28V27H13z" fill="#1f2422" stroke="#777"/><circle cx="8" cy="22" r="6.500" fill="#d8d8d8"/><path d="M6 18L10 25M4 24L10 20" stroke="#333" stroke-width="2"/></svg><span>Kubuntu - SecureC...</span></div>
    <div class="task active"><svg width="30" height="30"><rect width="30" height="30" rx="6" fill="url(#wpsg)"/><path d="M7 11H22V17H8V23" fill="none" stroke="#fff" stroke-width="2.600"/></svg><span>Kubernetes.ppt * -...</span></div>
    <div class="tray">
      <svg width="30" height="30"><path d="M0 0H30V30H0z"/><path d="M4 4L9 13L14 3" fill="none" stroke="#18c22a" stroke-width="3"/><path d="M18 13V4Q26 2 26 13" fill="none" stroke="#2348f0" stroke-width="3"/><path d="M27 18Q19 14 19 21Q19 27 27 25" fill="none" stroke="#e02020" stroke-width="3"/><circle cx="8" cy="22" r="7.500" fill="#f6a51c"/><path d="M8 17V23M8 25V27" stroke="#fff" stroke-width="2"/></svg>
      <svg width="26" height="26"><path d="M0 0H26V26H0z" fill="#7fb27c"/><path d="M2 2H24V24H2z" fill="#3fa0e8"/><circle cx="13" cy="13" r="9.500" fill="#2384d0" stroke="#d8eefc" stroke-width="1.500"/><path d="M13 7V9.500M13 11.500V19" stroke="#fff" stroke-width="2.500"/></svg>
      <svg width="26" height="28"><path d="M8 8Q8 1 13 1Q18 1 18 8" fill="none" stroke="#2f8fe0" stroke-width="1.500"/><path d="M3 6H23V27H1z" fill="#2f95ec"/><path d="M12 13L16 17L12 21M8 17h1" fill="none" stroke="#fff" stroke-width="2"/></svg>
      <svg width="26" height="26"><circle cx="12" cy="12" r="10" fill="none" stroke="#e8e8e8" stroke-width="2"/><path d="M12 5L17 11H14V18H10V11H7z" fill="#fff"/><circle cx="20" cy="20" r="4.500" fill="#3ba0dc"/></svg>
      <svg width="26" height="26"><path d="M1 11H25V24H1z" fill="none" stroke="#eee" stroke-width="2"/><path d="M4 15H22M4 18H22M7 21H19" stroke="#eee" stroke-width="1.600" stroke-dasharray="2 1"/><path d="M13 11V6H19V2" fill="none" stroke="#eee" stroke-width="1.500"/></svg>
      <svg width="26" height="26"><path d="M6 3H24V19H10M17 19V23M12 23.500H23" fill="none" stroke="#eee" stroke-width="2"/><path d="M2 2H8V10H2zM5 10V23H11" fill="#31363b" stroke="#eee" stroke-width="1.600"/></svg>
      <svg width="26" height="26"><circle cx="12" cy="7" r="5" fill="none" stroke="#bbb" stroke-width="1.700"/><path d="M3 23Q3 14 12 14" fill="none" stroke="#bbb" stroke-width="1.700"/><circle cx="19" cy="19" r="4.500" fill="none" stroke="#bbb" stroke-width="1.500"/><path d="M17 19H21" stroke="#bbb"/></svg>
      <svg width="26" height="26"><path d="M2 9H6L12 3V23L6 17H2z" fill="#fff"/><path d="M15 8Q18 13 15 18M18 4Q24 13 18 22" fill="none" stroke="#ddd" stroke-width="1.800"/></svg>
      <svg width="26" height="26"><path d="M5 4H21V24H5z" fill="none" stroke="#eee" stroke-width="2"/><path d="M8 1H18V7H8z" fill="#eee"/><path d="M8 11H18M8 15H16M8 19H13" stroke="#eee" stroke-width="1.700"/></svg>
      <svg width="20" height="26"><path d="M10 8L18 18H2z" fill="#f2f2f2"/></svg>
    </div>
    <div class="clock"><span>11:42 上午</span><small>2018/8/7</small></div>
  </footer>
</div>
</body>
</html>
```
FILE: styles.css
```css
*{box-sizing:border-box}
body{margin:0;background:#000;font:16px/1 "Noto Sans CJK SC","Noto Sans",sans-serif;color:#2c3236;overflow:hidden}
svg{display:block;flex:none}
.defs{position:absolute}
.se{font-family:"DejaVu Serif Condensed","DejaVu Serif",serif;font-stretch:condensed;color:#454a50}
.desktop{width:1728px;height:1080px;margin:0 auto;display:flex;flex-direction:column;background:#ecedef}
.caret{display:block;width:0;height:0;border:4px solid transparent;border-top:5px solid #66718c;border-bottom:0;flex:none}
.caret.up{border-top:0;border-bottom:5px solid #66718c}
.caret.dim{border-bottom-color:#ccc}
.caret.white{border-top-color:#fff}
.caret.bar{position:relative;top:3px}
.caret.bar::before{content:"";position:absolute;left:-4px;top:-9px;width:8px;height:2px;background:#66718c}

/* title bar */
.titlebar{height:37px;flex:none;display:flex;background:#444850;border-bottom:4px solid #e2ad53;box-shadow:inset 0 -1px #6b4a18;color:#dfe0e2}
.wps{width:148px;height:28px;background:#dd6b27;display:flex;align-items:center;padding-left:6px;color:#fff;border-bottom:1px solid #b9551b}
.wps svg{margin-top:-2px}
.wps b{font-size:18px;margin:-5px 0 0 7px;width:83px;letter-spacing:0;text-shadow:1px 1px 1px #9a4513;white-space:nowrap}
.wps .caret{margin-left:16px}
.menu{display:grid;grid-template-columns:75px 75px 76px 77px 122px 77px 77px;margin-left:5px;height:28px;align-items:center;justify-items:center}
.ctx{display:grid;grid-template-columns:116px 116px;width:232px;justify-items:center;background:linear-gradient(#3d4047,#35383d);height:34px}
.ctx span{height:34px;display:flex;align-items:center;padding:0 11px 6px 9px;gap:3px}
.ctx span::before{content:"";width:5px;height:16px;background:#f6a914;margin-top:5px}
.ctx .on{border-bottom:3px solid #f6a914;padding-bottom:3px;color:#fff}
.wintools{margin-left:auto;display:grid;grid-template-columns:28px 30px 44px 38px 2px 36px 48px 42px;width:268px;margin-right:10px;height:33px;align-items:center;justify-items:center}
.tsep{width:1px;height:16px;background:#2d3036}

/* ribbon */
.ribbon{height:93px;flex:none;display:flex;background:#ecedef;border-left:1px solid #e38c4b;border-right:1px solid #e08a53;border-top:1px solid #fdeecb;border-bottom:2px solid #c9cccf;padding-top:4px}
.group{position:relative;height:81px;display:flex;border-right:1px solid #cbcdd0;flex:none}
.g1{width:403px;padding-left:6px}.g2{width:212px;padding-left:7px}.g3{width:257px;flex-direction:column;padding-left:8px}
.g4{width:264px;flex-direction:column}.g5{width:269px}.g6{width:93px}
.launch{position:absolute;right:10px;bottom:0;width:7px;height:7px;border:1px solid #8a8e94;border-right-color:#ecedef}
.launch::after{content:"";position:absolute;right:-1px;bottom:-1px;width:4px;height:4px;border:solid #8a8e94;border-width:0 1px 1px 0}
.gallery{width:194px;height:69px;border:1px solid #b7bbc1;background:#fff;display:flex}
.cells{flex:1;display:grid;grid-template-columns:repeat(5,32.300px);grid-auto-rows:33px;align-items:center;justify-items:center;padding-left:1px}
.cells svg{width:20px;height:21px}
.gscroll{width:17px;border-left:1px solid #b7bbc1;display:flex;flex-direction:column}
.gscroll span{flex:1;display:grid;place-items:center;border-bottom:1px solid #c5c8cc}
.gscroll span:last-child{border:0}
.ln{fill:none;stroke:#51658f;stroke-width:1.300}.ln.w{stroke-width:1.500}.hd{fill:#2d4370}
.sh{fill:url(#sg);stroke:#7388ab;stroke-width:1.300}
.big{display:flex;flex-direction:column;align-items:center;padding-top:5px}
.big svg{height:34px}
.big label{display:flex;align-items:center;gap:6px;margin-top:5px;white-space:nowrap}
.w94{width:94px;margin-left:3px}.w60{width:60px}.w77{width:77px}.w56{width:56px}.w93{width:93px}
.stack{display:flex;flex-direction:column;margin-top:-1px}
.small{height:38px;display:flex;align-items:center;gap:6px;white-space:nowrap}
.small .caret{margin-left:1px}
.g1 .stack{margin-left:3px}
.g1 .small{gap:5px}
.stack .small:first-child{height:28px;margin-bottom:6px}
.off{color:#a0a3a6}
.c1{padding-left:11px;width:122px}.c3{padding-left:7px}
.c3 .small{gap:5px}
.fontbox{width:241px;height:32px;border:1px solid #b4b8be;display:grid;grid-template-columns:185px 1fr;background:#fafbfa;font:17.500px/28px "DejaVu Serif Condensed","DejaVu Serif",serif;font-stretch:condensed;color:#43484c}
.fontbox span{display:flex;align-items:center;justify-content:space-between;padding:0 5px 2px 8px;letter-spacing:.2px}
.fontbox .caret{margin-top:5px}
.fontbox span+span{border-left:1px solid #b4b8be;padding-left:3px;padding-right:4px}
.fontrow{display:grid;grid-template-columns:32px 32px 33px 32px 26px 14px 8px 30px 36px;height:34px;margin-top:4px;align-items:center;justify-items:center;font:19px/22px "Open Sans","Noto Sans",sans-serif;color:#4a4d50;width:245px}
.fontrow u{font-size:17px}
.fontrow em{font-family:"DejaVu Serif",serif}
.fontrow sup,.fontrow sub{font-size:10px;line-height:0}
.shadow{text-shadow:1px 1px 2px #888}
.acolor{color:#3f6d3a;font-size:20px;line-height:17px;border-bottom:4px solid #000;width:20px;text-align:center}
.rsep{width:1px;height:27px;background:#cbcdd0}
.prow1,.prow2{display:grid;align-items:center;justify-items:center;height:32px;width:264px}
.prow1{grid-template-columns:21px 18px 26px 12px 10px 25px 29px 2px 33px 1px 31px 22px 20px;padding-left:10px}
.prow2{grid-template-columns:19px 40px 17px 43px 15px 20px 16px 40px 19px 20px;padding-left:11px;height:34px;margin-top:5px}
.hl{width:31px;height:27px;background:#f0b998;display:grid;place-items:center}
.k{stroke:#4b4e51;stroke-width:1.800;fill:none}.bl{stroke:#4478d0;stroke-width:1.800;fill:none}.bl.thin{stroke-width:1.300}.gr{stroke:#999c9e;stroke-width:1.700;fill:none}

/* work area */
.work{height:877px;flex:none;display:flex}
.docs{width:1321px;display:flex;flex-direction:column}
.tabs{height:33px;display:flex;background:#dfe0e2;border-bottom:1px solid #bfc2c5}
.qat{width:261px;display:grid;grid-template-columns:repeat(8,28.600px) 1fr;align-items:center;justify-items:center;padding-left:3px}
.qat svg{width:22px;height:22px}
.qat .caret{border-top-color:#5f6570;border-left-width:5px;border-right-width:5px}
.tab{width:240px;height:33px;background:#ecedef;border:solid #bfc2c5;border-width:0 1px;display:flex;align-items:center;padding-left:3px}
.tab span{font-size:17.500px;margin:1px 0 0 8px;width:181px;white-space:nowrap;letter-spacing:.35px}
.plus{flex:1;display:flex;justify-content:space-between;align-items:center;padding:0 9px 1px 11px}
.panes{flex:1;display:flex;min-height:0;background:linear-gradient(#ecedef,#d4d5d8)}
.side{width:257px;display:flex;flex-direction:column;border-right:1px solid #c3c5c9}
.sidehead{height:50px;flex:none;position:relative;display:flex;font-size:16px;margin-left:8px}
.sidehead::after{content:"";position:absolute;left:0;right:9px;top:41px;height:1px;background:#b5b8bd}
.sidehead span{padding:16px 0 0 4px;width:50px;height:44px;white-space:nowrap}
.sidehead span.on{width:58px;padding-left:5px;margin-left:7px;color:#e77a3c;border-bottom:3px solid #c9814f;position:relative;z-index:1}
.sidehead span.on::before{content:"";position:absolute;left:-8px;top:15px;width:1px;height:21px;background:#b5b8bd}
.sidehead svg{margin:11px 0 0 111px}
.sidebody{display:flex;height:794px;overflow:hidden}
.thumbs{width:224px;padding-top:11.500px;height:792px;overflow:hidden}
.th{display:flex;height:103px;margin-bottom:21.170px;position:relative}
.th b{width:43px;margin-right:8px;text-align:right;font:17.500px/17px "DejaVu Serif Condensed","DejaVu Serif",serif;font-stretch:condensed;color:#85888a}
.th svg{width:162px;height:103px;background:#fff;border:1px solid #bfc1c1}
.sel svg{border:3px solid #e99b70;width:163px;height:105px;margin:-1px 0 0 -1px}
.sel::before{content:"";position:absolute;left:17px;top:-1px;width:34px;height:42px;background:#e99b70;clip-path:polygon(0 0,100% 0,100% 100%,0 58%)}
.sel b{position:relative;color:#fff}
.t{fill:#caecf6;stroke:#2b7a92;stroke-width:1.200}
.n{fill:none;stroke:#777;stroke-width:.9}
.tt{font-size:4px;fill:#555}.xs{font-size:2.800px}
.vbar{width:26px;background:#d1d4d9;display:flex;flex-direction:column;align-items:center;padding:7px 0 8px;height:794px}
.grip{width:20px;height:56px;background:#f3f4f4;border:1px solid #c0c3c6;display:grid;place-items:center;margin-top:44px}
.grip::before{content:"";width:10px;height:12px;background:linear-gradient(#c3c6c9 0 1px,transparent 1px 5px,#c3c6c9 5px 6px,transparent 6px 11px,#c3c6c9 11px)}
.vbar>.caret:last-child{margin-top:auto}
.vbar .caret{border-left-width:5px;border-right-width:5px}
.editor{flex:1;display:flex;flex-direction:column}
.stage{height:770px;display:flex}
.canvas{width:1037px;height:770px}
.paper{fill:#fdfefe;stroke:#b9bbbd;stroke-width:1.500;filter:drop-shadow(0 0 4px rgba(0,0,0,.3))}
.handle{fill:#fff;stroke:#9a9aa5;stroke-width:1.400}
.slidetext{font:24px "Liberation Serif",serif}
.slidetitle{font:28.500px "Liberation Serif",serif}
.cjk{font-family:"Noto Sans CJK SC",sans-serif;font-weight:300}
.brandname{font:700 23px "Noto Sans CJK SC",sans-serif;fill:#1c1c1c}
.brandtag{font:italic 10px "Noto Sans CJK SC",sans-serif;fill:#2c2c2c}
.vbar.main{width:27px;height:770px;padding-top:15px}
.vbar.main .grip{margin-top:45px}
.pgs{margin-top:auto;display:flex;flex-direction:column;align-items:center;gap:8px;fill:#5f6b80;margin-bottom:-4px}
.hbar{height:25px;background:#d2d4d9;display:flex;justify-content:space-between;padding:8px 32px 0 7px}
.hbar i{border:4px solid transparent;border-right:4px solid #bbbfc6;border-left:0;height:0}
.hbar .r{border-right:0;border-left:4px solid #bbbfc6}
.notes{flex:1;background:#d6d7d9;border-top:1px solid #bcc0c6;font-size:21.500px;font-weight:300;padding:10px 16px}

.strip{width:54px;border-left:1px solid #c3c6c9;display:flex;flex-direction:column;align-items:center;padding-left:1px}
.dragger{width:20px;height:4px;border:solid #cfd1d4;border-width:1px 0;margin:14px 0 22px}
.strip div{height:64.800px;display:flex;flex-direction:column;align-items:center;gap:6px;position:relative;width:100%;padding-top:3px}
.strip svg{width:22px;height:22px;fill:#646b79}
.strip .on svg{fill:#e98b34;width:24px;height:24px;margin:-1px 0}
.strip .on::after{content:"";position:absolute;right:-6px;top:10px;width:9px;height:9px;background:#f6f7f7;border:solid #c3c6c9;border-width:0 0 1px 1px;transform:rotate(45deg)}
.shapes{width:346px;border-left:1px solid #c3c6c9;border-right:1px solid #c3c6c9;display:flex;flex-direction:column}
.shead{height:33px;display:flex;align-items:center;padding:0 9px 4px 12px;gap:7px;border-bottom:1px solid #c3c6c9}
.shead svg{margin:2px 0 0 auto}
.sbody{flex:1;background:#f7f7f7;padding:0 7px 0 8px}
.sbody p{margin:0;height:29px;padding-top:7px}
.select{height:27px;border:2px solid #bfc4c8;border-width:1px 2px 2px 1px;background:#fff;display:flex;align-items:center;justify-content:space-between;padding:0 7px 3px 6px}
.select .caret{border-left-width:5px;border-right-width:5px;margin-top:2px}
.listbox{height:706px;border:1px solid #c9cccd;background:#fefffe;display:flex;justify-content:space-between}
.list{width:296px;padding:2px 0 0 2px;overflow:hidden}
.list h4{margin:0;height:27px;background:#e5e7e5;font-weight:400;color:#5b5e60;padding:3px 11px}
.grid{display:grid;grid-template-columns:repeat(7,41.800px);grid-auto-rows:37.800px;align-items:center;justify-items:center;margin-left:-1px}
.grid svg{width:22px;height:22px}
.grid.sh{fill:url(#sg)}
.grid.sh svg{overflow:visible}
.grid .ln{fill:none}
.lbar{width:24px;background:#f2f4f3;display:flex;flex-direction:column;align-items:center;padding:12px 0 10px}
.lbar .caret{border-left-width:5px;border-right-width:5px}
.lbar .grip{width:23px;height:406px;margin:8px 0 auto}
.change{width:105px;height:31px;margin:12px 0 0;padding:0 0 3px;border:1px solid #b9bcbf;background:#e2e4e4;color:#a3a6a8;font:16px/1 "Noto Sans CJK SC",sans-serif;display:block}
.edge{flex:1;background:#ecedef;padding-top:399px}
.edge i{display:block;height:136px;background:#e8671b;padding-top:64px}
.edge i::before{content:"";display:block;border:4px solid transparent;border-left:4px solid #fff;border-right:0;width:0;margin-left:1px}

/* status */
.status{height:31px;flex:none;display:flex;align-items:center;background:#dcdde0;border-top:1px solid #c0c2c5;box-shadow:inset 0 -2px #b4b6b8;white-space:nowrap;padding-bottom:2px}
.status .se{font-size:17px}
.s1{width:475px;padding-left:177px;height:28px;line-height:27px;border-right:1px solid #b7b9bc}
.s1 .se{letter-spacing:.8px}
.s2{padding-left:92px;width:643px;height:28px;line-height:27px;border-right:1px solid #b7b9bc}
.s2 .se{letter-spacing:.7px}
.s3{width:90px;height:28px;display:flex;align-items:center;gap:6px;padding-left:5px;border-right:1px solid #b7b9bc}
.s3 i{width:9px;height:9px;background:#54b435}
.s4{width:82px;display:flex;align-items:center;gap:6px;padding-left:6px}
.v{width:30px;height:28px;display:grid;place-items:center;margin-right:7px}
.v.on{background:#f2b596}
.v:nth-child(6){margin-left:-1px}.v:nth-child(7){margin-left:-1px}
.status .zoom{margin-left:14px;width:56px;letter-spacing:.8px}
.slider{margin-left:0}

/* taskbar */
.taskbar{height:42px;flex:none;display:flex;align-items:center;background:#2f3439;color:#e4e6e6;font-family:"Noto Sans","Noto Sans CJK SC",sans-serif;font-size:17.500px;border-bottom:1px solid #cfd1d2}
.k1{margin-left:9px}
.pager{display:grid;grid-template-columns:27px 27px;grid-template-rows:17px 17px;gap:1px;margin:-2px 0 0 11px}
.pager i{background:#3f444a}.pager .a{background:#74bbdf}.pager .b{background:#64686b;border:1px solid #8a8d8f}
.k2{margin-left:12px}.k3{margin:0 9px 0 17px}
.task{width:211px;height:41px;margin-right:2px;border-top:4px solid #45494c;background:#303335;display:flex;align-items:center;padding:0 0 2px 5px;white-space:nowrap;gap:6px;flex:none}
.kate{padding-left:10px;gap:10px;letter-spacing:.18px}
.focus{background:#4b4f52}.active{border-color:#2b78c2;margin-right:12px;padding-left:5px}
.tray{display:grid;grid-template-columns:36px 35px 36px 35px 36px 35px 35px 35px 35px 35px;align-items:center;justify-items:center;margin:-2px 0 0 -2px;flex:none}
.clock{margin:-3px 8px 0 auto;width:100px;text-align:right;font-family:"Noto Sans","Noto Sans CJK SC",sans-serif;font-weight:300;color:#d5d7d8;flex:none}
.clock span{display:block;font-size:20.500px;line-height:20px;white-space:nowrap}
.clock small{display:block;font-size:14.500px;line-height:17px;padding-right:17px}
```
